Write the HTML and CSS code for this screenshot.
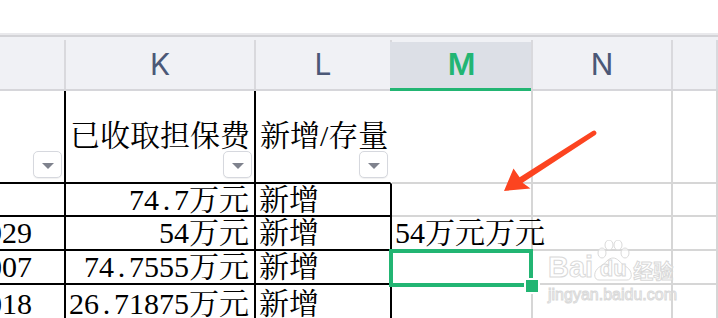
FILE: index.html
```html
<!DOCTYPE html>
<html lang="zh-CN">
<head>
<meta charset="utf-8">
<link rel="stylesheet" href="styles.css">
</head>
<body>
<div class="app">
  <div class="top"></div>
  <div class="colhdr">
    <div class="ch"></div>
    <div class="ch"><span class="lt">K</span></div>
    <div class="ch"><span class="lt">L</span></div>
    <div class="ch active"><span class="lt">M</span></div>
    <div class="ch"><span class="lt">N</span></div>
    <div class="ch last"></div>
  </div>
  <div class="sheet">
    <!-- row A -->
    <div class="c b"><span class="flt"></span></div>
    <div class="c b hd">已收取担保费<span class="flt"></span></div>
    <div class="c b hd open">新增<span class="hw">/</span>存量<span class="flt"></span></div>
    <div class="c g"></div>
    <div class="c g"></div>
    <div class="c g"></div>
    <!-- row B -->
    <div class="c b j"></div>
    <div class="c b num">74<span class="hw">.</span>7万元</div>
    <div class="c b">新增</div>
    <div class="c g"></div>
    <div class="c g"></div>
    <div class="c g"></div>
    <!-- row C -->
    <div class="c b j">0929</div>
    <div class="c b num">54万元</div>
    <div class="c b">新增</div>
    <div class="c g">54万元万元</div>
    <div class="c g"></div>
    <div class="c g"></div>
    <!-- row D -->
    <div class="c b j">1007</div>
    <div class="c b num">74<span class="hw">.</span>7555万元</div>
    <div class="c b">新增</div>
    <div class="c g"><div class="sel"><span class="handle"></span></div></div>
    <div class="c g"></div>
    <div class="c g"></div>
    <!-- row E -->
    <div class="c b j">1018</div>
    <div class="c b num">26<span class="hw">.</span>71875万元</div>
    <div class="c b">新增</div>
    <div class="c g"></div>
    <div class="c g"></div>
    <div class="c g"></div>
  </div>

  <svg class="arrow" viewBox="0 0 718 318" width="718" height="318">
    <path d="M504 191 L513.5 168.5 L519.6 177.2 L592.6 131.1 A2.1 2.1 0 0 1 595.4 134.9 L522.6 182.8 L530.5 188.5 Z" fill="#fc4420"/>
  </svg>

  <div class="wm">
    <div class="wm-row">
      <span class="wm-bai">Bai</span>
      <span class="wm-paw">
        <svg viewBox="0 0 40 44" width="40" height="44">
          <ellipse cx="9" cy="13" rx="4" ry="5" />
          <ellipse cx="16" cy="5" rx="4" ry="5" />
          <ellipse cx="25" cy="5" rx="4" ry="5" />
          <ellipse cx="32" cy="13" rx="4" ry="5" />
          <path d="M6 40 C0 40 0 30 8 26 C13 23 15 18 20 18 C25 18 27 23 32 26 C40 30 40 40 34 40 Z" />
        </svg>
        <span class="wm-du">du</span>
      </span>
      <span class="wm-jy">经验</span>
    </div>
    <div class="wm-url">jingyan.baidu.com</div>
  </div>
</div>
</body>
</html>
```

FILE: styles.css
```css
html, body {
  margin: 0;
  padding: 0;
  background: #fff;
}

.app {
  position: relative;
  width: 718px;
  height: 318px;
  overflow: hidden;
  background: #fff;
}

.top {
  height: 33px;
}

/* column header bar */
.colhdr {
  display: grid;
  grid-template-columns: 66px 190px 136px 141px 140px 1fr;
  box-sizing: border-box;
  height: 58px;
  border-top: 2px solid #e9e9ec;
  border-bottom: 2px solid #d6d6da;
  background: #f0f1f5;
  box-shadow: inset 0 2px 0 #d3d3d7;
}

.ch {
  position: relative;
  display: flex;
  align-items: center;
  justify-content: center;
  padding-top: 4px;
  font-family: "Inter", "Liberation Sans", sans-serif;
  font-size: 30px;
  color: #4b5877;
}

.ch::after {
  content: "";
  position: absolute;
  right: 0;
  top: 5px;
  bottom: 0;
  width: 2px;
  background: #d9d9dd;
}

.ch .lt {
  position: relative;
  z-index: 1;
  padding-right: 2px;
}

.ch.active::before {
  content: "";
  position: absolute;
  left: -2px;
  right: 2px;
  top: 7px;
  bottom: -2px;
  background: #dcdfe6;
  border-bottom: 3px solid #22b573;
}

.ch.active .lt {
  color: #22b573;
  font-weight: 600;
}

/* sheet grid */
.sheet {
  display: grid;
  grid-template-columns: 66px 190px 136px 141px 140px 1fr;
  grid-template-rows: 93px 33px 34px 34px 40px;
}

.c {
  position: relative;
  box-sizing: border-box;
  min-width: 0;
  display: flex;
  align-items: center;
  padding: 0 3px;
  border-right: 2px solid #000;
  border-bottom: 2px solid #000;
  white-space: nowrap;
  font-family: "Liberation Serif", "Noto Serif CJK SC", "Noto Sans CJK SC", serif;
  font-size: 30px;
  line-height: 1;
  color: #000;
}

.c.g {
  border-right-color: #d6d6d6;
  border-bottom-color: #d6d6d6;
}

.c.open {
  border-right-color: transparent;
}

.c.hd {
  padding-left: 4px;
  padding-bottom: 2px;
}

.c.j {
  justify-content: flex-end;
  padding-right: 32px;
  overflow: hidden;
}

.c.num {
  justify-content: flex-end;
  padding-right: 5px;
}

.hw {
  display: inline-block;
  width: 0.5em;
  text-align: center;
}

/* filter dropdown buttons */
.flt {
  position: absolute;
  right: 2px;
  bottom: 4px;
  width: 29px;
  height: 27px;
  box-sizing: border-box;
  border: 1.5px solid #d6d8de;
  border-radius: 5px;
  background: #fff;
  box-shadow: 0 1px 1px rgba(0, 0, 0, 0.06);
  display: flex;
  align-items: center;
  justify-content: center;
}

.flt::after {
  content: "";
  margin-top: 3px;
  border-left: 6px solid transparent;
  border-right: 6px solid transparent;
  border-top: 6px solid #7f828d;
}

/* selection */
.sel {
  position: absolute;
  left: -3px;
  right: -2px;
  top: -2px;
  bottom: -4px;
  border: 4px solid #22b573;
  z-index: 2;
}

.handle {
  position: absolute;
  right: -11px;
  bottom: -11px;
  width: 12px;
  height: 12px;
  background: #22b573;
  border: 2px solid #fff;
}

/* annotation arrow */
.arrow {
  position: absolute;
  left: 0;
  top: 0;
  pointer-events: none;
  z-index: 3;
}

/* watermark */
.wm {
  position: absolute;
  left: 548px;
  top: 240px;
  z-index: 4;
  display: flex;
  flex-direction: column;
  align-items: flex-start;
  font-family: "Liberation Sans", Arial, sans-serif;
  color: rgba(255, 255, 255, 0.75);
  -webkit-text-stroke: 1px #d9d9d9;
  pointer-events: none;
}

.wm-row {
  display: flex;
  align-items: flex-end;
  height: 44px;
}

.wm-bai {
  font-size: 29px;
  font-weight: bold;
  line-height: 1;
  margin-bottom: 2px;
}

.wm-paw {
  position: relative;
  width: 40px;
  height: 44px;
  display: flex;
  align-items: flex-end;
  justify-content: center;
}

.wm-paw svg {
  position: absolute;
  left: 0;
  top: 0;
  fill: rgba(255, 255, 255, 0.6);
  stroke: #dadada;
  stroke-width: 1;
}

.wm-du {
  position: relative;
  font-size: 22px;
  font-weight: bold;
  line-height: 1;
  margin-bottom: 4px;
}

.wm-jy {
  font-family: "Noto Sans CJK SC", sans-serif;
  font-size: 20px;
  font-weight: bold;
  line-height: 1;
  margin-bottom: 3px;
}

.wm-url {
  font-size: 16px;
  line-height: 1;
  margin-top: 3px;
}
```
